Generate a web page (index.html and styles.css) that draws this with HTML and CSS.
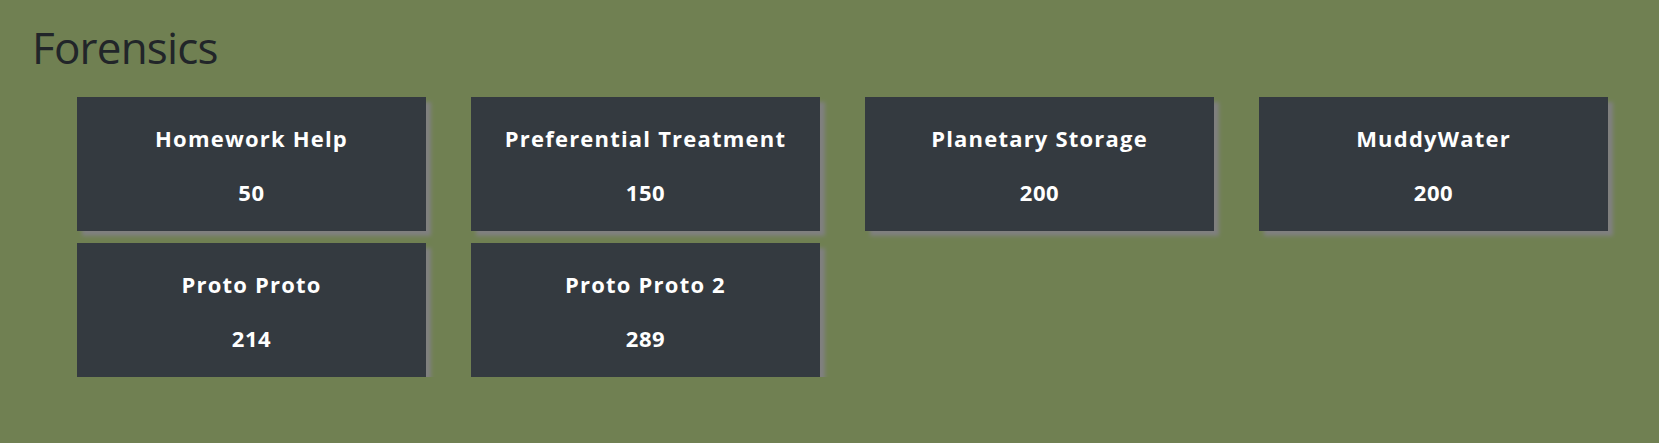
FILE: index.html
```html
<!DOCTYPE html>
<html>
<head>
<meta charset="utf-8">
<link rel="stylesheet" href="styles.css">
</head>
<body>
<div class="page">
  <h1 class="heading">Forensics</h1>
  <div class="grid">
    <div class="card"><p class="title">Homework Help</p><p class="points">50</p></div>
    <div class="card"><p class="title">Preferential Treatment</p><p class="points">150</p></div>
    <div class="card"><p class="title">Planetary Storage</p><p class="points">200</p></div>
    <div class="card"><p class="title">MuddyWater</p><p class="points">200</p></div>
    <div class="card"><p class="title">Proto Proto</p><p class="points">214</p></div>
    <div class="card"><p class="title">Proto Proto 2</p><p class="points">289</p></div>
  </div>
</div>
</body>
</html>
```
FILE: styles.css
```css
html, body {
  margin: 0;
  padding: 0;
  background: #708052;
  font-family: "Open Sans", "Noto Sans", sans-serif;
}
.page {
  padding: 20px 0 0 0;
}
.heading {
  margin: 0 0 0 32px;
  font-size: 44px;
  font-weight: 400;
  letter-spacing: -0.8px;
  line-height: 54px;
  color: #212529;
  height: 77px;
}
.grid {
  display: grid;
  grid-template-columns: repeat(4, 349px);
  column-gap: 45px;
  row-gap: 12px;
  padding-left: 77px;
}
.card {
  height: 134px;
  background: #343a40;
  box-shadow: 5px 5px 4px #808080;
  display: flex;
  flex-direction: column;
  align-items: center;
  color: #ffffff;
}
.title {
  margin: 27px 0 0 0;
  font-size: 22px;
  font-weight: 700;
  letter-spacing: 1.2px;
  line-height: 28px;
}
.points {
  margin: 26px 0 0 0;
  font-size: 22px;
  font-weight: 700;
  letter-spacing: 0.6px;
  line-height: 28px;
}
```
